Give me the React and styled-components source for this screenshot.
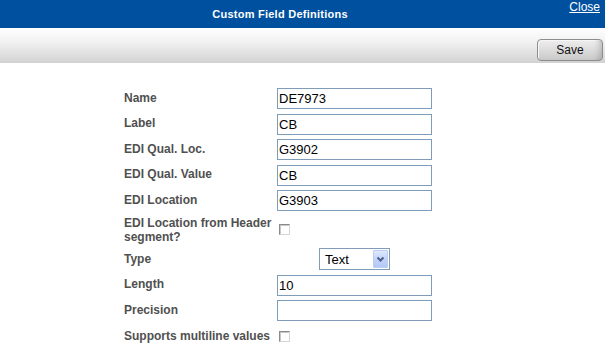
import React from "react";
import styled, { createGlobalStyle } from "styled-components";

const Global = createGlobalStyle`
  html, body { margin: 0; padding: 0; background: #fff; }
  body { font-family: "Liberation Sans", Arial, sans-serif; }
`;

const Page = styled.div`
  width: 605px;
  height: 350px;
  overflow: hidden;
  background: #fff;
`;

const Header = styled.div`
  height: 28px;
  background: #0050a0;
  display: flex;
  align-items: center;
`;

const Title = styled.div`
  flex: 1;
  text-align: center;
  color: #fff;
  font-weight: bold;
  font-size: 11px;
  letter-spacing: 0.25px;
`;

const CloseLink = styled.a`
  align-self: flex-start;
  width: 45px;
  box-sizing: border-box;
  padding-right: 5px;
  text-align: right;
  color: #fff;
  font-size: 12px;
  line-height: 14px;
  text-decoration: underline;
  cursor: pointer;
`;

const Toolbar = styled.div`
  height: 35px;
  box-sizing: border-box;
  padding: 11px 2px 0 0;
  display: flex;
  justify-content: flex-end;
  align-items: flex-start;
  background: linear-gradient(180deg, #ffffff 0%, #f1f1f1 40%, #d2d2d2 100%);
`;

const SaveButton = styled.button`
  width: 66px;
  height: 22px;
  box-sizing: border-box;
  border: 1px solid #8d8d8d;
  border-radius: 4px;
  background: linear-gradient(180deg, #eeeeee 0%, #dcdcdc 50%, #c9c9c9 100%);
  box-shadow: inset -7px 0 6px -5px rgba(0, 0, 0, 0.2), inset 1px 1px 0 #f8f8f8;
  font-family: "Liberation Sans", Arial, sans-serif;
  font-size: 12px;
  color: #111;
  padding: 0;
  cursor: pointer;
`;

const Form = styled.div`
  display: grid;
  grid-template-columns: 153px 155px;
  grid-template-rows: 21px 21px 21px 21px 21px 28px 22px 21px 21px 21px;
  row-gap: 4.5px;
  align-items: center;
  padding: 25px 0 0 124px;
`;

const Label = styled.div`
  font-size: 12px;
  font-weight: bold;
  color: #505050;
  line-height: 14px;
  margin-bottom: ${(p) => (p.$raised ? "2px" : "0")};
`;

const TextInput = styled.input`
  width: 155px;
  height: 21px;
  box-sizing: border-box;
  border: 1px solid #7f9db9;
  padding: 0 2px 0 1px;
  font-family: "Liberation Sans", Arial, sans-serif;
  font-size: 13px;
  color: #000;
  outline: none;
  margin: 0;
`;

const Check = styled.input.attrs({ type: "checkbox" })`
  appearance: none;
  -webkit-appearance: none;
  display: block;
  width: 11px;
  height: 11px;
  box-sizing: border-box;
  margin: 0 0 0 2px;
  border: 1px solid;
  border-color: #8a8a8a #d6d6d6 #d6d6d6 #8a8a8a;
  background: #fff;
  box-shadow: inset 1px 1px 0 #c8c8c8;
`;

const CenterCell = styled.div`
  display: flex;
  justify-content: center;
`;

const SelectBox = styled.div`
  width: 71px;
  height: 22px;
  box-sizing: border-box;
  border: 1px solid #7f9db9;
  display: flex;
  align-items: center;
  background: #fff;
  padding: 1px;
`;

const SelectText = styled.span`
  flex: 1;
  padding-left: 4px;
  font-size: 13px;
  color: #000;
`;

const DropButton = styled.span`
  width: 15px;
  height: 18px;
  box-sizing: border-box;
  border: 1px solid #b9cdf5;
  border-radius: 1px;
  background: linear-gradient(180deg, #dfe8fe 0%, #c3d3fb 50%, #b4c8f6 100%);
  display: flex;
  align-items: center;
  justify-content: center;
`;

const rows = [
  ["Name", "DE7973"],
  ["Label", "CB"],
  ["EDI Qual. Loc.", "G3902"],
  ["EDI Qual. Value", "CB"],
  ["EDI Location", "G3903"],
];

export default function App() {
  return (
    <Page>
      <Global />
      <Header>
        <Title>Custom Field Definitions</Title>
        <CloseLink>Close</CloseLink>
      </Header>
      <Toolbar>
        <SaveButton>Save</SaveButton>
      </Toolbar>
      <Form>
        {rows.map(([l, v]) => (
          <React.Fragment key={l}>
            <Label $raised>{l}</Label>
            <TextInput defaultValue={v} />
          </React.Fragment>
        ))}
        <Label>
          EDI Location from Header
          <br />
          segment?
        </Label>
        <div>
          <Check />
        </div>
        <Label>Type</Label>
        <CenterCell>
          <SelectBox>
            <SelectText>Text</SelectText>
            <DropButton>
              <svg width="9" height="7" viewBox="0 0 9 7">
                <path d="M1.5 1.5 L4.5 4.5 L7.5 1.5" fill="none" stroke="#4d6185" strokeWidth="2" />
              </svg>
            </DropButton>
          </SelectBox>
        </CenterCell>
        <Label $raised>Length</Label>
        <TextInput defaultValue="10" />
        <Label $raised>Precision</Label>
        <TextInput defaultValue="" />
        <Label>Supports multiline values</Label>
        <div>
          <Check />
        </div>
      </Form>
    </Page>
  );
}
